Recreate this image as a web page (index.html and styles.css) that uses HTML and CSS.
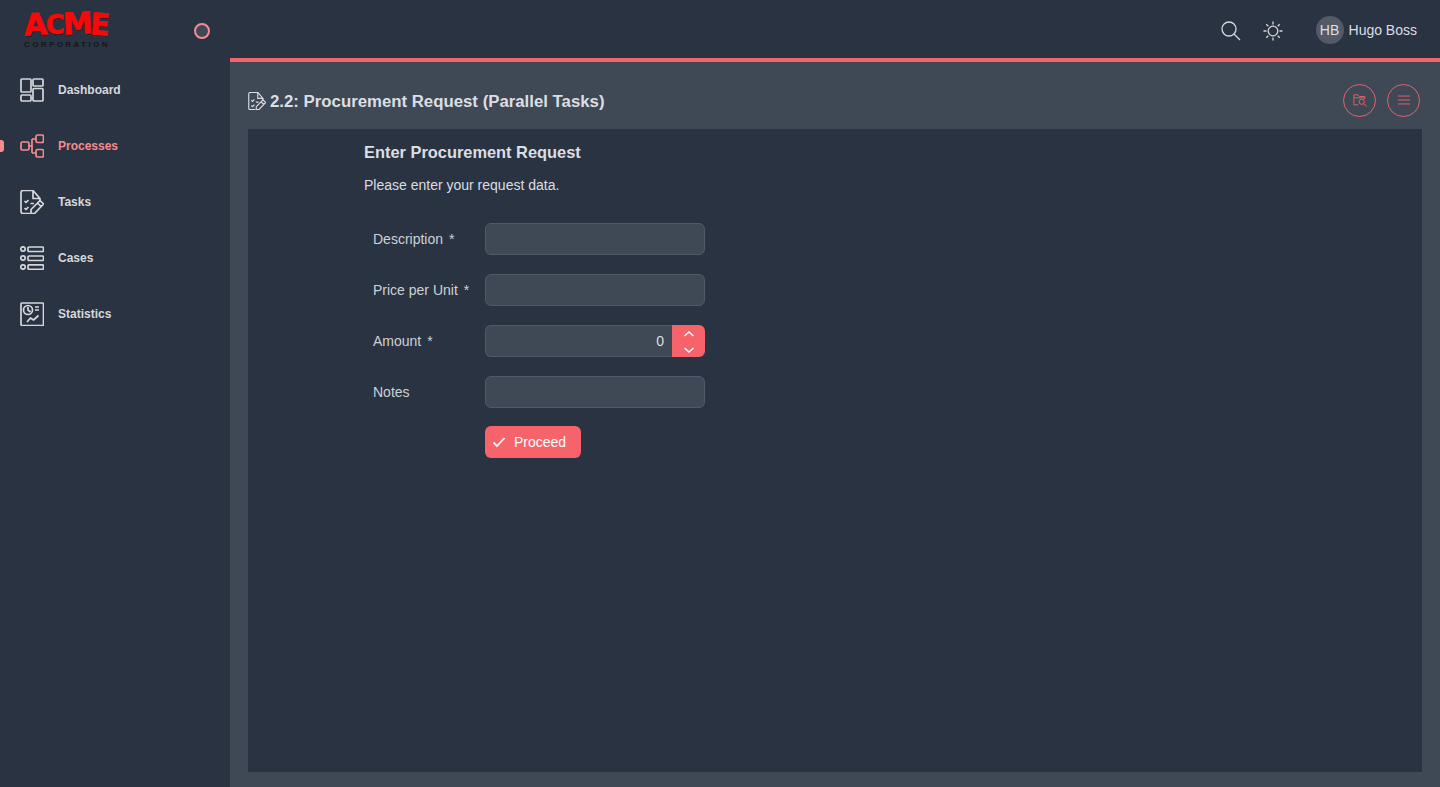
FILE: index.html
```html
<html lang="en">
<head>
  <meta charset="UTF-8" />
  <title>Enter Procurement Request</title>
  <link rel="stylesheet" href="styles.css">
</head>
<body>
  <aside class="sidebar">
    <div class="brand">
      <div class="logo">
        <div class="logo-word"><span class="l-a">A</span><span class="l-c">C</span><span class="l-m">M</span><span class="l-e">E</span></div>
        <div class="logo-sub">CORPORATION</div>
      </div>
      <span class="pin"></span>
    </div>
    <nav class="nav">
      <a class="nav-item">
        <svg class="nav-icon" viewBox="0 0 24 24"><rect x="1" y="1" width="10" height="13" rx="1"/><rect x="13" y="1" width="10" height="7" rx="1"/><rect x="1" y="17" width="10" height="6" rx="1"/><rect x="13" y="10.500" width="10" height="12.500" rx="1"/></svg>
        Dashboard
      </a>
      <a class="nav-item active">
        <svg class="nav-icon" viewBox="0 0 24 24"><rect x="1" y="8" width="8" height="8" rx="1.500"/><rect x="16" y="1" width="7.500" height="7.500" rx="1.500"/><rect x="16" y="15.500" width="7.500" height="7.500" rx="1.500"/><path d="M9 12h3M12 5v14M12 5h4M12 19h4"/></svg>
        Processes
      </a>
      <a class="nav-item">
        <svg class="nav-icon" viewBox="0 0 24 24"><path d="M10 23.500H3a2 2 0 0 1-2-2V2.500a2 2 0 0 1 2-2h10l7 8v3M13 .5v8h7"/><path d="M4.500 11l1.500 1.500L8.500 10M4.500 18l1.500 1.500L8.500 17M10.500 13.500h3.500"/><path d="M11 23.500v-4l9-9 3.500 3.500-9 9.500zM17.500 13l3.500 3.500"/></svg>
        Tasks
      </a>
      <a class="nav-item">
        <svg class="nav-icon" viewBox="0 0 24 24"><circle cx="3" cy="3" r="2.200"/><circle cx="3" cy="12" r="2.200"/><circle cx="3" cy="21" r="2.200"/><rect x="8" y="1" width="15.500" height="4.500" rx="1"/><rect x="8" y="10" width="15.500" height="4.500" rx="1"/><rect x="8" y="18.800" width="15.500" height="4.500" rx="1"/></svg>
        Cases
      </a>
      <a class="nav-item">
        <svg class="nav-icon" viewBox="0 0 24 24"><rect x="1" y="1" width="22.500" height="22.500" rx="1"/><circle cx="8" cy="8" r="4.500"/><path d="M8 5v3l2.500 2M15 5h4M15 8h4M7 20l3.500-4 3 2 5-4.500"/></svg>
        Statistics
      </a>
    </nav>
  </aside>

  <div class="main">
    <header class="topbar">
      <svg class="top-icon" viewBox="0 0 20 20"><circle cx="8" cy="8" r="7"/><path d="M13 13l6 6"/></svg>
      <svg class="top-icon sun" viewBox="0 0 20 20"><circle cx="10" cy="10" r="4.800"/><path d="M10 .5v3M10 16.500v3M.5 10h3M16.500 10h3M3.300 3.300l2 2M14.700 14.700l2 2M3.300 16.700l2-2M14.700 5.300l2-2"/></svg>
      <div class="user">
        <span class="avatar">HB</span>
        <span>Hugo Boss</span>
      </div>
    </header>

    <div class="content">
      <div class="page-head">
        <svg class="title-icon" viewBox="0 0 24 24"><path d="M10 23.500H3a2 2 0 0 1-2-2V2.500a2 2 0 0 1 2-2h10l7 8v3M13 .5v8h7"/><path d="M4.500 11l1.500 1.500L8.500 10M4.500 18l1.500 1.500L8.500 17M10.500 13.500h3.500"/><path d="M11 23.500v-4l9-9 3.500 3.500-9 9.500zM17.500 13l3.500 3.500"/></svg>
        <h1 class="page-title">2.2: Procurement Request (Parallel Tasks)</h1>
        <div class="head-actions">
          <button class="round-btn">
            <svg viewBox="0 0 16 16"><path d="M6 13.500H1V2h4.500L7 4h6.500v3"/><path d="M1 5.500H13"/><circle cx="10" cy="10" r="3"/><path d="M12.200 12.200L15.500 15.500"/></svg>
          </button>
          <button class="round-btn">
            <svg viewBox="0 0 16 16"><path d="M1 3.500h14M1 8h14M1 12.500h14"/></svg>
          </button>
        </div>
      </div>

      <section class="panel">
        <h2 class="form-title">Enter Procurement Request</h2>
        <p class="form-text">Please enter your request data.</p>
        <form class="form-grid">
          <label class="field-label">Description<span class="req">*</span></label>
          <input class="field" type="text">
          <label class="field-label">Price per Unit<span class="req">*</span></label>
          <input class="field" type="text">
          <label class="field-label">Amount<span class="req">*</span></label>
          <div class="spinner">
            <input class="field spinner-input" type="text" value="0">
            <div class="spinner-btns">
              <svg viewBox="0 0 12 6"><path d="M1.500 5L6 1l4.500 4"/></svg>
              <svg viewBox="0 0 12 6"><path d="M1.500 1L6 5l4.500-4"/></svg>
            </div>
          </div>
          <label class="field-label">Notes</label>
          <input class="field" type="text">
          <span></span>
          <button class="proceed" type="button">
            <svg viewBox="0 0 14 14"><path d="M1.500 7.500L5 11l7.500-8"/></svg>
            Proceed
          </button>
        </form>
      </section>
    </div>
  </div>
</body>
</html>
```

FILE: styles.css
```css
* {
  margin: 0;
  padding: 0;
  box-sizing: border-box;
}

html, body {
  height: 100%;
  overflow: hidden;
}

body {
  display: flex;
  background: #2a3342;
  color: #dcdee2;
  font-family: 'Liberation Sans', Arial, sans-serif;
  font-size: 14px;
}

/* sidebar */
.sidebar {
  width: 230px;
  flex-shrink: 0;
  background: #2a3342;
}

.brand {
  height: 62px;
  display: flex;
  align-items: center;
  justify-content: space-between;
  padding: 0 20px 0 24px;
}

.logo {
  width: 86px;
  margin-top: -2px;
}

.logo-word {
  display: flex;
  height: 26px;
  color: #f40a0a;
  font-family: 'DejaVu Sans', sans-serif;
  font-weight: bold;
  font-size: 30px;
  line-height: 26px;
  -webkit-text-stroke: 0.800px #f40a0a;
  text-shadow: 1px 1px 0 #15151c;
}

.logo-word span {
  display: block;
}

.l-a {
  transform: rotate(-3deg);
}

.l-c {
  transform: scale(0.850, 0.900);
  margin-left: -3px;
}

.l-m {
  transform: translateY(-1px) rotate(-3deg);
  margin-left: -3px;
}

.l-e {
  transform: scale(0.950, 1) rotate(4deg);
  margin-left: -3px;
}

.logo-sub {
  margin-top: 3px;
  color: #16161b;
  font-size: 8px;
  line-height: 8px;
  font-weight: bold;
  letter-spacing: 2.400px;
  white-space: nowrap;
}

.pin {
  width: 16px;
  height: 16px;
  border-radius: 50%;
  border: 2px solid #f98a8f;
  background: #3f4956;
}

.nav-item {
  position: relative;
  height: 56px;
  display: flex;
  align-items: center;
  gap: 14px;
  padding-left: 20px;
  color: #d6d8dc;
  font-size: 12px;
  font-weight: bold;
}

.nav-icon {
  width: 24px;
  height: 24px;
  fill: none;
  stroke: currentColor;
  stroke-width: 1.700;
  stroke-linejoin: round;
}

.nav-item.active {
  color: #f98a8f;
}

.nav-item.active::before {
  content: "";
  position: absolute;
  left: 0;
  top: 22px;
  width: 4px;
  height: 12px;
  border-radius: 0 3px 3px 0;
  background: #f98a8f;
}

/* top bar */
.main {
  flex: 1;
  display: flex;
  flex-direction: column;
  min-width: 0;
}

.topbar {
  height: 62px;
  flex-shrink: 0;
  display: flex;
  align-items: center;
  justify-content: flex-end;
  padding: 2px 23px 0 0;
  border-bottom: 4px solid #f6636b;
}

.top-icon {
  width: 20px;
  height: 20px;
  fill: none;
  stroke: #d6d8dc;
  stroke-width: 1.300;
  margin-top: 1px;
}

.sun {
  margin-left: 22px;
}

.user {
  display: flex;
  align-items: center;
  gap: 5px;
  margin-left: 33px;
  font-size: 14px;
}

.avatar {
  width: 28px;
  height: 28px;
  border-radius: 50%;
  background: #545b67;
  display: flex;
  align-items: center;
  justify-content: center;
}

/* content */
.content {
  flex: 1;
  display: flex;
  flex-direction: column;
  background: #3f4956;
  padding: 0 18px 15px;
}

.page-head {
  height: 67px;
  flex-shrink: 0;
  display: flex;
  align-items: center;
  padding: 11px 2px 0 0;
}

.title-icon {
  width: 18px;
  height: 18px;
  fill: none;
  stroke: #dcdee2;
  stroke-width: 1.500;
  margin-right: 4px;
}

.page-title {
  margin-top: 2px;
  font-size: 16.800px;
  font-weight: bold;
  color: #dcdee2;
}

.head-actions {
  margin-left: auto;
  margin-top: -2px;
  display: flex;
  gap: 11px;
}

.round-btn {
  width: 33px;
  height: 33px;
  border-radius: 50%;
  border: 1px solid #e8606a;
  background: transparent;
  display: flex;
  align-items: center;
  justify-content: center;
}

.round-btn svg {
  width: 14px;
  height: 14px;
  fill: none;
  stroke: #f0626a;
  stroke-width: 1;
}

.panel {
  flex: 1;
  background: #2a3342;
  padding: 13px 116px;
}

.form-title {
  font-size: 16.400px;
  line-height: 20px;
  font-weight: bold;
  color: #dcdee2;
}

.form-text {
  margin-top: 14px;
  line-height: 18px;
}

.form-grid {
  display: grid;
  grid-template-columns: 112px 220px;
  grid-auto-rows: 32px;
  row-gap: 19px;
  margin-top: 29px;
  padding-left: 9px;
  align-items: center;
}

.field-label {
  color: #ced1d6;
  white-space: nowrap;
}

.req {
  margin-left: 6px;
}

.field {
  width: 100%;
  height: 32px;
  background: #3f4956;
  border: 1px solid #505a67;
  border-radius: 6px;
  color: #dcdee2;
  font-family: inherit;
  font-size: 14px;
  outline: none;
}

.spinner {
  display: flex;
  height: 32px;
}

.spinner-input {
  flex: 1;
  min-width: 0;
  text-align: right;
  padding-right: 8px;
  border-radius: 6px 0 0 6px;
  border-right: 0;
}

.spinner-btns {
  width: 33px;
  background: #f6636b;
  border-radius: 0 6px 6px 0;
  display: flex;
  flex-direction: column;
  align-items: center;
  justify-content: space-between;
  padding: 6px 0 4px;
}

.spinner-btns svg {
  width: 12px;
  height: 6px;
  fill: none;
  stroke: #fff;
  stroke-width: 1.500;
}

.proceed {
  justify-self: start;
  width: 96px;
  height: 32px;
  margin-top: -2px;
  display: flex;
  align-items: center;
  gap: 8px;
  padding-left: 7px;
  background: #f6636b;
  border: 0;
  border-radius: 6px;
  color: #fff;
  font-family: inherit;
  font-size: 14px;
}

.proceed svg {
  width: 14px;
  height: 14px;
  fill: none;
  stroke: #fff;
  stroke-width: 1.800;
}
```
